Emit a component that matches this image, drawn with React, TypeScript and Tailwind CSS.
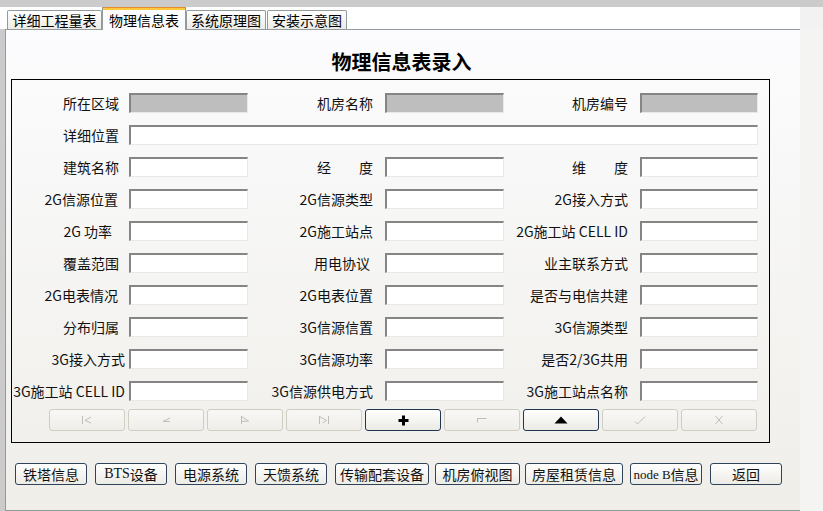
import type { ReactNode } from "react";

type Cell = { label: string; gray?: boolean; pr?: string };

const rows: Cell[][] = [
  [
    { label: "所在区域", gray: true },
    { label: "机房名称", gray: true },
    { label: "机房编号", gray: true },
  ],
  [{ label: "建筑名称" }, { label: "经　　度" }, { label: "维　　度" }],
  [{ label: "2G信源位置", pr: "pr-[11px]" }, { label: "2G信源类型" }, { label: "2G接入方式" }],
  [{ label: "2G 功率\u2002" }, { label: "2G施工站点" }, { label: "2G施工站 CELL ID" }],
  [{ label: "覆盖范围" }, { label: "用电协议", pr: "pr-[15px]" }, { label: "业主联系方式" }],
  [{ label: "2G电表情况", pr: "pr-[11px]" }, { label: "2G电表位置" }, { label: "是否与电信共建" }],
  [{ label: "分布归属" }, { label: "3G信源信置" }, { label: "3G信源类型" }],
  [{ label: "3G接入方式", pr: "pr-[4px]" }, { label: "3G信源功率" }, { label: "是否2/3G共用" }],
  [{ label: "3G施工站 CELL ID", pr: "pr-[4px]" }, { label: "3G信源供电方式" }, { label: "3G施工站点名称" }],
];

const labelWidths = ["w-[117px]", "w-[137px]", "w-[136px]"];
const inputWidths = ["w-[119px]", "w-[119px]", "w-[118px]"];

function Field({ gray, width }: { gray?: boolean; width: string }) {
  return (
    <div
      className={`${width} h-[20px] border-t-2 border-l-2 border-r border-b border-t-[#858585] border-l-[#858585] border-r-[#e8e8e8] border-b-[#e8e8e8] ${
        gray ? "bg-[#bebebe]" : "bg-white"
      }`}
    />
  );
}

function Label({ text, width, pr }: { text: string; width: string; pr: string }) {
  return (
    <div className={`${width} ${pr} flex justify-end items-center whitespace-pre leading-[20px] text-[14px] text-[#111]`}>
      {text}
    </div>
  );
}

// navigator glyphs
const dim = "#bdbdbd";

function NavIcon({ kind }: { kind: string }) {
  switch (kind) {
    case "first":
      return (
        <svg width="12" height="10" viewBox="0 0 12 10" fill="none" stroke={dim} strokeWidth="1">
          <path d="M1.5 1v8M10 2L4 5.5l6 2.5" />
        </svg>
      );
    case "prior":
      return (
        <svg width="12" height="10" viewBox="0 0 12 10" fill="none" stroke={dim} strokeWidth="1">
          <path d="M10 3L3 6.5h7" />
        </svg>
      );
    case "next":
      return (
        <svg width="12" height="10" viewBox="0 0 12 10" fill="none" stroke={dim} strokeWidth="1">
          <path d="M2.5 1v8M2.5 1.5l7 4.5-7 0.5" />
        </svg>
      );
    case "last":
      return (
        <svg width="12" height="10" viewBox="0 0 12 10" fill="none" stroke={dim} strokeWidth="1">
          <path d="M1.5 1v8M1.5 1.5l7 4-4 2.5M10.5 1v8" />
        </svg>
      );
    case "insert":
      return (
        <svg width="11" height="11" viewBox="0 0 11 11" fill="#000">
          <rect x="4" y="0.5" width="3" height="10" />
          <rect x="0.5" y="4" width="10" height="3" />
        </svg>
      );
    case "delete":
      return (
        <svg width="12" height="8" viewBox="0 0 12 8" fill="none" stroke={dim} strokeWidth="1">
          <path d="M1.5 6.5v-4h9" />
        </svg>
      );
    case "edit":
      return (
        <svg width="14" height="8" viewBox="0 0 14 8" fill="#000">
          <path d="M7 0.5L13.5 7.5H0.5z" />
        </svg>
      );
    case "post":
      return (
        <svg width="12" height="10" viewBox="0 0 12 10" fill="none" stroke={dim} strokeWidth="1">
          <path d="M1 6.5l2.5 2.5L11 1.5" />
        </svg>
      );
    default:
      return (
        <svg width="10" height="10" viewBox="0 0 10 10" fill="none" stroke={dim} strokeWidth="1">
          <path d="M1.5 1l7 8M8.5 1l-7 8" />
        </svg>
      );
  }
}

const navKinds = ["first", "prior", "next", "last", "insert", "delete", "edit", "post", "cancel"];

function NavButton({ kind }: { kind: string }) {
  const enabled = kind === "insert" || kind === "edit";
  return (
    <div
      className={`w-[76px] h-[22px] rounded-[3px] flex items-center justify-center border ${
        enabled
          ? "border-[#22364f] bg-gradient-to-b from-white to-[#ebeae4]"
          : "border-[#d0cec3] bg-gradient-to-b from-[#f8f8f6] to-[#efeee9]"
      }`}
    >
      <NavIcon kind={kind} />
    </div>
  );
}

function Btn({ children, w, ml }: { children: ReactNode; w: string; ml: string }) {
  return (
    <div
      className={`${w} ${ml} h-[22px] shrink-0 rounded-[3px] border border-[#2f435a] bg-gradient-to-b from-white to-[#ecebe5] flex items-center justify-center whitespace-nowrap text-[14px] leading-none text-[#111]`}
    >
      {children}
    </div>
  );
}

function Tab({ text, active, w }: { text: string; active?: boolean; w: string }) {
  if (active) {
    return (
      <div
        className={`${w} relative z-10 -mb-px h-[23px] shrink-0 border-x border-[#919b9c] bg-[#fcfcfe] flex flex-col`}
      >
        <div className="h-[1px] bg-[#e68b2c]" />
        <div className="h-[2px] bg-[#ffc73c]" />
        <div className="flex-1 flex items-center justify-center text-[14px] leading-none pb-[1px]">{text}</div>
      </div>
    );
  }
  return (
    <div
      className={`${w} h-[19px] shrink-0 rounded-t-[2px] border-x border-t border-[#919b9c] bg-gradient-to-b from-white to-[#ecebe6] flex items-center justify-center text-[14px] leading-none`}
    >
      {text}
    </div>
  );
}

export default function App() {
  return (
    <div className="w-[823px] h-[511px] overflow-hidden bg-[#cbcbcb] font-['Noto_Sans_CJK_SC',sans-serif] text-black">
      {/* top strip */}
      <div className="h-[7px] bg-[#cbcbcb]" />

      {/* tabs */}
      <div className="flex h-[22px]">
        <div className="w-[800px] flex items-end bg-white pl-[7px]">
          <Tab text="详细工程量表" w="w-[95px]" />
          <Tab text="物理信息表" active w="w-[84px]" />
          <Tab text="系统原理图" w="w-[80px]" />
          <div className="w-[1px]" />
          <Tab text="安装示意图" w="w-[80px]" />
        </div>
        <div className="flex-1 bg-[#f2f2f2]" />
      </div>

      {/* panel */}
      <div className="flex h-[482px]">
        <div className="w-[5px] bg-[#cbcbcb]" />
        <div className="w-[795px] border-l border-t border-b border-[#919b9c] bg-gradient-to-b from-[#fcfcfe] to-[#efeee9]">
          <div className="pt-[20px] h-[44px] text-center text-[20px] font-bold leading-[24px] pr-[3px]">物理信息表录入</div>

          <div className="ml-[5px] mt-[5px] w-[759px] border border-black pt-[13px] pb-[11px]">
            <div className="flex flex-col gap-[12px]">
              {/* first row */}
              <div className="flex">
                {rows[0].map((c, i) => (
                  <div key={i} className="flex">
                    <Label text={c.label} width={labelWidths[i]} pr={i === 0 ? "pr-[10px]" : "pr-[12px]"} />
                    <Field gray={c.gray} width={inputWidths[i]} />
                  </div>
                ))}
              </div>

              {/* full width row */}
              <div className="flex">
                <Label text="详细位置" width="w-[117px]" pr="pr-[10px]" />
                <Field width="w-[629px]" />
              </div>

              {rows.slice(1).map((row, r) => (
                <div key={r} className="flex">
                  {row.map((c, i) => (
                    <div key={i} className="flex">
                      <Label
                        text={c.label}
                        width={labelWidths[i]}
                        pr={c.pr ?? (i === 0 ? "pr-[10px]" : "pr-[12px]")}
                      />
                      <Field width={inputWidths[i]} />
                    </div>
                  ))}
                </div>
              ))}
            </div>

            {/* navigator */}
            <div className="mt-[8px] pl-[37px] flex gap-[3px]">
              {navKinds.map((k) => (
                <NavButton key={k} kind={k} />
              ))}
            </div>
          </div>

          {/* bottom buttons */}
          <div className="mt-[20px] flex pl-[9px]">
            <Btn w="w-[72px]" ml="ml-0">铁塔信息</Btn>
            <Btn w="w-[72px]" ml="ml-[8px]">
              <span className="font-['Liberation_Serif',serif] text-[14px]">BTS</span>设备
            </Btn>
            <Btn w="w-[72px]" ml="ml-[8px]">电源系统</Btn>
            <Btn w="w-[72px]" ml="ml-[8px]">天馈系统</Btn>
            <Btn w="w-[94px]" ml="ml-[8px]">传输配套设备</Btn>
            <Btn w="w-[85px]" ml="ml-[6px]">机房俯视图</Btn>
            <Btn w="w-[98px]" ml="ml-[5px]">房屋租赁信息</Btn>
            <Btn w="w-[72px]" ml="ml-[7px]">
              <span className="font-['Liberation_Serif',serif] text-[13px]">node B</span>信息
            </Btn>
            <Btn w="w-[72px]" ml="ml-[8px]">返回</Btn>
          </div>
        </div>
        <div className="flex-1 bg-[#f4f4f2]" />
      </div>
    </div>
  );
}
